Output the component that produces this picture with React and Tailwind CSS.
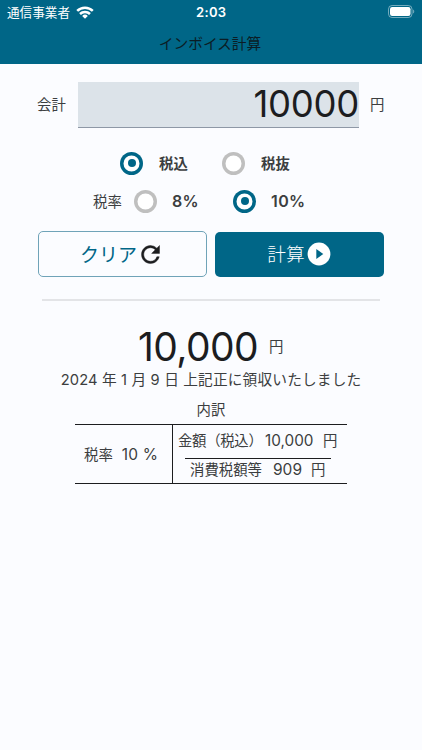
/**
 * App.jsx - インボイス計算画面
 */

import React, { useState } from 'react'

function StatusBar() {
  return (
    <div className="flex h-[24px] items-center justify-between pl-[7px] pr-[7px] text-white">
      <div className="flex w-[189px] items-center gap-[6px]">
        <span className="pt-[2px] text-[12.6px] leading-none">通信事業者</span>
        <svg width="18" height="13" viewBox="0 0 18 13" fill="none" stroke="currentColor" strokeWidth="2.5">
          <path d="M1.2 4.9a11 11 0 0 1 15.6 0" />
          <path d="M4 8a7.1 7.1 0 0 1 10 0" />
          <path d="M9 12.7L6.2 9.9a4 4 0 0 1 5.6 0z" fill="currentColor" stroke="none" />
        </svg>
      </div>
      <span className="flex-1 text-[13px] font-semibold leading-none tracking-[0.35px]">2:03</span>
      <svg className="-mt-px" width="27" height="13" viewBox="0 0 27 13" fill="none">
        <rect x="0.5" y="0.5" width="23.5" height="12" rx="3.6" stroke="#fff" strokeOpacity="0.45" />
        <rect x="2" y="2" width="20.5" height="9" rx="2.2" fill="#fff" />
        <path d="M25.2 4.5c1.4.5 1.4 3.5 0 4z" fill="#fff" fillOpacity="0.5" />
      </svg>
    </div>
  )
}

function Radio({ checked, onClick }) {
  return (
    <button
      type="button"
      onClick={onClick}
      className={`flex size-[23px] flex-shrink-0 items-center justify-center rounded-full bg-white ${
        checked ? 'shadow-[inset_0_0_0_3.5px_#006687]' : 'shadow-[inset_0_0_0_3.5px_#bfbfbf]'
      }`}
    >
      {checked && <span className="size-[8px] rounded-full bg-[#006687]" />}
    </button>
  )
}

export default function App() {
  const [included, setIncluded] = useState(true)
  const [rate, setRate] = useState(10)

  return (
    <div className="h-[750px] w-[422px] overflow-hidden whitespace-nowrap bg-[#fbfcff] font-['Inter','Noto_Sans_CJK_JP',sans-serif] text-[14.4px] leading-none text-[#3c3e40]">
      <header className="h-[64px] bg-[#006687]">
        <StatusBar />
        <h1 className="flex h-[40px] items-center justify-center pr-[2px] text-[14.7px] text-[#0b1d25]">インボイス計算</h1>
      </header>

      {/* 会計入力 */}
      <div className="mt-[18px] flex h-[46px] items-center pl-[37px]">
        <span className="w-[41px]">会計</span>
        <div className="flex h-[46px] w-[281px] items-center justify-end border-b border-[#8e98a6] bg-[#dce3e9] text-[36.5px] tracking-[-0.3px] text-[#1c1d1f]">
          10000
        </div>
        <span className="ml-[11px]">円</span>
      </div>

      {/* 税込・税抜 */}
      <div className="mt-[23px] flex h-[24px] items-center pl-[120px] font-bold">
        <Radio checked={included} onClick={() => setIncluded(true)} />
        <span className="ml-[16px] w-[63px] pt-[2px]">税込</span>
        <Radio checked={!included} onClick={() => setIncluded(false)} />
        <span className="ml-[16px] pt-[2px]">税抜</span>
      </div>

      {/* 税率 */}
      <div className="mt-[14px] flex h-[24px] items-center pl-[93px]">
        <span className="w-[41px] pt-[2px]">税率</span>
        <Radio checked={rate === 8} onClick={() => setRate(8)} />
        <span className="ml-[15px] w-[61px] text-[16px] font-semibold tracking-[0.2px]">8%</span>
        <Radio checked={rate === 10} onClick={() => setRate(10)} />
        <span className="ml-[15px] text-[16px] font-semibold tracking-[0.4px]">10%</span>
      </div>

      <div className="mt-[18px] flex items-center gap-[8px] pl-[38px]">
        <button
          type="button"
          className="flex h-[46px] w-[169px] items-center justify-center rounded-[5px] border border-[#6fa3b8] pr-px text-[19px] text-[#006687]"
        >
          <span className="pt-[2px]">クリア</span>
          <svg width="27" height="27" viewBox="0 0 24 24" fill="#1c1d1f" stroke="#1c1d1f" strokeWidth="0.4">
            <path d="M17.65 6.35A7.958 7.958 0 0 0 12 4c-4.42 0-7.99 3.58-7.99 8s3.57 8 7.99 8c3.73 0 6.84-2.55 7.73-6h-2.08A5.99 5.99 0 0 1 12 18c-3.31 0-6-2.69-6-6s2.69-6 6-6c1.66 0 3.14.69 4.22 1.78L13 11h7V4z" />
          </svg>
        </button>
        <button
          type="button"
          className="flex h-[45px] w-[169px] items-center justify-center gap-[2px] rounded-[5px] bg-[#006687] pr-px text-[18.7px] text-white"
        >
          <span className="pt-[2px] font-light">計算</span>
          <svg width="24" height="24" viewBox="0 0 24 24">
            <circle cx="12" cy="12" r="11.4" fill="#fff" />
            <path d="M9.3 7v10l7-5z" fill="#006687" />
          </svg>
        </button>
      </div>

      <hr className="ml-[42px] mt-[22px] w-[338px] border-t-2 border-[#e3e4e7]" />

      {/* 計算結果 */}
      <div className="mt-[24px] flex h-[42px] items-center pl-[138px]">
        <span className="w-[131px] text-[39px] tracking-[-0.6px] text-[#1c1d1f]">10,000</span>
        <span className="pt-[2px]">円</span>
      </div>
      <p className="mt-[2px] flex h-[21px] items-center justify-center pt-px text-[14.7px] tracking-[0.15px]">
        2024 年 1 月 9 日 上記正に領収いたしました
      </p>
      <p className="mt-[11px] flex h-[18px] items-center justify-center pt-px">内訳</p>

      {/* 内訳 */}
      <div className="ml-[75px] mt-[5px] flex h-[60px] w-[272px] border-y border-[#1c1d1f]">
        <div className="flex w-[98px] items-center gap-[9px] border-r border-[#1c1d1f] pl-[9px]">
          <span className="pt-[2px]">税率</span>
          <span className="pt-px text-[15.5px] tracking-[0.2px]">10 %</span>
        </div>
        <div className="flex flex-1 flex-col">
          <div className="flex h-[33px] items-center pl-[5px]">
            <span className="w-[87px] tracking-[-0.3px]">金額（税込）</span>
            <span className="w-[58px] pb-[2px] text-[15.3px]">10,000</span>
            <span>円</span>
          </div>
          <div className="ml-[12px] flex h-[22px] w-[146px] items-center border-t border-[#1c1d1f] pl-[5px] pt-px">
            <span className="w-[83px]">消費税額等</span>
            <span className="w-[38px] text-[15.5px]">909</span>
            <span>円</span>
          </div>
        </div>
      </div>
    </div>
  )
}
